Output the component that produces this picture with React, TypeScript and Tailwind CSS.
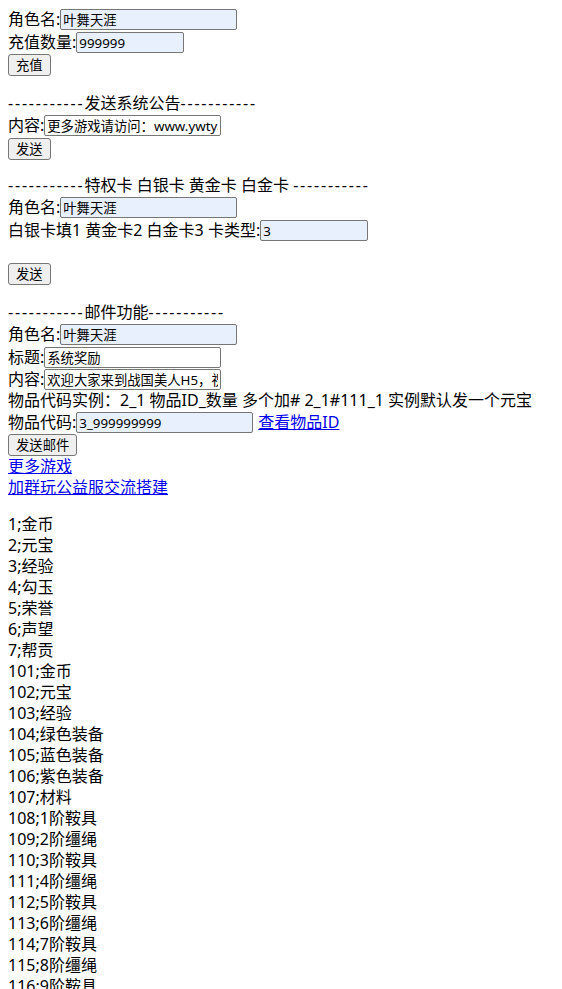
import React from "react";

const fieldBase =
  "h-[21px] border border-[#767676] rounded-[2px] px-[2px] text-[13.33px] leading-[17px] text-black outline-none";

function Field({ value, width, filled }: { value: string; width: string; filled?: boolean }) {
  return (
    <input
      readOnly
      defaultValue={value}
      className={`${fieldBase} ${width} ${filled ? "bg-[#e8f0fe]" : "bg-white"}`}
    />
  );
}

function Btn({ children }: { children: React.ReactNode }) {
  return (
    <button className="h-[22px] px-[7px] border border-[#767676] rounded-[3px] bg-[#efefef] text-[13.33px] leading-[18px] text-black">
      {children}
    </button>
  );
}

// 分隔线的横杠比较宽
function Dashes() {
  return <span className="tracking-[1.8px]">-----------</span>;
}

const items: [number, string][] = [
  [1, "金币"],
  [2, "元宝"],
  [3, "经验"],
  [4, "勾玉"],
  [5, "荣誉"],
  [6, "声望"],
  [7, "帮贡"],
  [101, "金币"],
  [102, "元宝"],
  [103, "经验"],
  [104, "绿色装备"],
  [105, "蓝色装备"],
  [106, "紫色装备"],
  [107, "材料"],
  [108, "1阶鞍具"],
  [109, "2阶缰绳"],
  [110, "3阶鞍具"],
  [111, "4阶缰绳"],
  [112, "5阶鞍具"],
  [113, "6阶缰绳"],
  [114, "7阶鞍具"],
  [115, "8阶缰绳"],
  [116, "9阶鞍具"],
  [117, "10阶缰绳"],
  [118, "11阶鞍具"],
  [119, "12阶缰绳"],
  [120, "坐骑"],
];

export default function App() {
  return (
    <div
      className="h-screen overflow-y-scroll bg-white text-[16px] leading-[21px] text-black whitespace-nowrap"
      style={{ fontFamily: '"Noto Sans", "Noto Sans CJK SC", sans-serif' }}
    >
      <div className="p-2">
        {/* 充值 */}
        <div className="flex items-center h-[23px]">
          <span>角色名:</span>
          <Field value="叶舞天涯" width="w-[177px]" filled />
        </div>
        <div className="flex items-center h-[23px]">
          <span>充值数量:</span>
          <Field value="999999" width="w-[108px]" filled />
        </div>
        <div className="flex items-center h-[22px]">
          <Btn>充值</Btn>
        </div>
        <div className="h-[17px]" />

        {/* 公告 */}
        <div className="h-[21px]">
          <Dashes />
          发送系统公告
          <Dashes />
        </div>
        <div className="flex items-center h-[23px]">
          <span>内容:</span>
          <Field value="更多游戏请访问：www.ywtyab.com" width="w-[177px]" />
        </div>
        <div className="flex items-center h-[23px]">
          <Btn>发送</Btn>
        </div>
        <div className="h-[15px]" />

        {/* 特权卡 */}
        <div className="h-[21px]">
          <Dashes />
          特权卡 白银卡 黄金卡 白金卡 <Dashes />
        </div>
        <div className="flex items-center h-[23px]">
          <span>角色名:</span>
          <Field value="叶舞天涯" width="w-[177px]" filled />
        </div>
        <div className="flex items-center h-[23px]">
          <span>白银卡填1 黄金卡2 白金卡3 卡类型:</span>
          <Field value="3" width="w-[108px]" filled />
        </div>
        <div className="h-[20px]" />
        <div className="flex items-center h-[23px]">
          <Btn>发送</Btn>
        </div>
        <div className="h-[17px]" />

        {/* 邮件 */}
        <div className="h-[21px]">
          <Dashes />
          邮件功能
          <Dashes />
        </div>
        <div className="flex items-center h-[23px]">
          <span>角色名:</span>
          <Field value="叶舞天涯" width="w-[177px]" filled />
        </div>
        <div className="flex items-center h-[22px]">
          <span>标题:</span>
          <Field value="系统奖励" width="w-[177px]" />
        </div>
        <div className="flex items-center h-[22px]">
          <span>内容:</span>
          <Field value="欢迎大家来到战国美人H5，祝您游戏愉快" width="w-[177px]" />
        </div>
        <div className="h-[21px]">物品代码实例：2_1 物品ID_数量 多个加# 2_1#111_1 实例默认发一个元宝</div>
        <div className="flex items-center h-[23px]">
          <span>物品代码:</span>
          <Field value="3_999999999" width="w-[177px]" filled />
          <a href="#" className="ml-[5px] text-[#0000ee] underline">
            查看物品ID
          </a>
        </div>
        <div className="flex items-center h-[22px]">
          <Btn>发送邮件</Btn>
        </div>
        <div className="h-[21px]">
          <a href="#" className="text-[#0000ee] underline">
            更多游戏
          </a>
        </div>
        <div className="h-[21px]">
          <a href="#" className="text-[#0000ee] underline">
            加群玩公益服交流搭建
          </a>
        </div>
        <div className="h-[16px]" />

        {/* 物品ID列表 */}
        <div>
          {items.map(([id, name]) => (
            <div key={id} className="h-[21px]">
              {id};{name}
            </div>
          ))}
        </div>
      </div>
    </div>
  );
}
